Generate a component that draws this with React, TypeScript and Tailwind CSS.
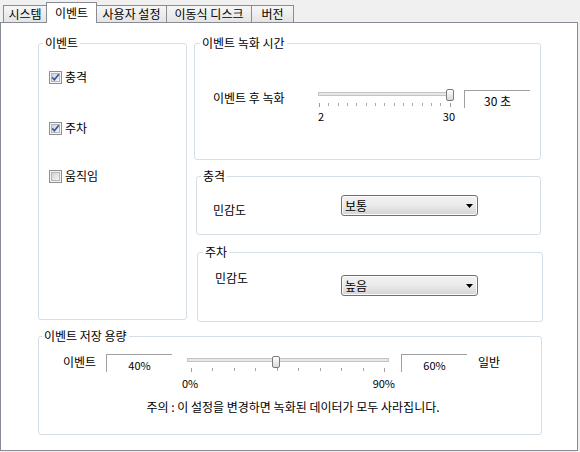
import React from "react";

function Tab({ label, active, cls }: { label: string; active?: boolean; cls: string }) {
  if (active) {
    return (
      <div
        className={
          "relative z-10 -ml-px -mb-px h-[21px] border border-b-0 border-[#898c95] bg-white flex items-start justify-center pt-[2px] leading-[16px] " +
          cls
        }
      >
        {label}
      </div>
    );
  }
  return (
    <div
      className={
        "-ml-px first:ml-0 h-[17px] border border-b-0 border-[#898c95] bg-linear-to-b from-[#f6f6f6] to-[#e4e4e4] flex items-center justify-center leading-[16px] " +
        cls
      }
    >
      {label}
    </div>
  );
}

function CheckBox({ checked }: { checked?: boolean }) {
  return (
    <div className="w-[13px] h-[13px] border border-[#8e8f8f] bg-[#f4f4f4] p-[1px] shrink-0">
      <div className="relative w-full h-full border border-[#b3b7bc] bg-linear-to-br from-[#cfd2d6] to-[#f6f6f6]">
        {checked && (
          <svg className="absolute -left-[1px] -top-[1px]" width="9" height="9" viewBox="0 0 9 9">
            <path d="M1.2 4.4 L3.4 6.8 L7.8 1.2" fill="none" stroke="#3a56a0" strokeWidth="1.7" />
          </svg>
        )}
      </div>
    </div>
  );
}

function Combo({ value }: { value: string }) {
  return (
    <div className="w-[137px] h-[21px] rounded-[3px] border border-[#707070] bg-linear-to-b from-[#f3f3f3] via-[#eaeaea] to-[#d4d4d4] shadow-[inset_0_0_0_1px_#fbfbfb] flex items-center justify-between pl-[3px] pr-[4px] leading-[16px]">
      <span>{value}</span>
      <svg width="7" height="4" viewBox="0 0 7 4">
        <path d="M0 0 H7 L3.5 4 Z" fill="#000" />
      </svg>
    </div>
  );
}

function Thumb({ cls }: { cls: string }) {
  return (
    <div
      className={
        "absolute top-0 w-[8px] h-[12px] rounded-[2px] border border-[#7b7b7b] bg-linear-to-b from-[#ffffff] to-[#d9d9d9] " +
        cls
      }
    />
  );
}

function Ticks({ count, cls }: { count: number; cls: string }) {
  return (
    <div className={"flex justify-between " + cls}>
      {Array.from({ length: count }).map((_, i) => (
        <div
          key={i}
          className={
            i === 0 || i === count - 1 ? "w-px h-[4px] bg-[#9c9c9c]" : "w-px h-[3px] bg-[#a8a8a8]"
          }
        />
      ))}
    </div>
  );
}

export default function App() {
  return (
    <div className="w-[580px] h-[452px] bg-[#f0f0f0] text-[12px] text-black font-['Noto_Sans_CJK_KR',sans-serif] overflow-hidden">
      {/* Tabs */}
      <div className="flex items-end h-[22px] pl-[3px]">
        <Tab label="시스템" cls="w-[44px]" />
        <Tab label="이벤트" active cls="w-[51px]" />
        <Tab label="사용자 설정" cls="w-[71px]" />
        <Tab label="이동식 디스크" cls="w-[86px]" />
        <Tab label="버전" cls="w-[43px]" />
      </div>

      {/* Panel */}
      <div className="w-[578px] h-[429px] border border-[#898c95] bg-white flex flex-col pt-[12px] pl-[37px]">
        <div className="flex items-start">
          {/* 이벤트 group */}
          <fieldset className="w-[149px] h-[285px] border border-[#d5dfe5] rounded-[3px]">
            <legend className="ml-[4px] px-[2px] leading-[16px]">이벤트</legend>
            <div className="flex flex-col pl-[10px]">
              <div className="mt-[18px] h-[16px] flex items-center gap-[3px]">
                <CheckBox checked />
                <span className="leading-[16px]">충격</span>
              </div>
              <div className="mt-[35px] h-[16px] flex items-center gap-[3px]">
                <CheckBox checked />
                <span className="leading-[16px]">주차</span>
              </div>
              <div className="mt-[32px] h-[16px] flex items-center gap-[3px]">
                <CheckBox />
                <span className="leading-[16px]">움직임</span>
              </div>
            </div>
          </fieldset>

          {/* Right column */}
          <div className="ml-[7px] flex flex-col">
            <fieldset className="w-[347px] h-[125px] border border-[#d5dfe5] rounded-[3px]">
              <legend className="ml-[5px] px-[2px] leading-[16px]">이벤트 녹화 시간</legend>
              <div className="mt-[36px] pl-[18px] flex items-start">
                <div className="w-[105px] mt-[3px] leading-[16px]">이벤트 후 녹화</div>
                <div className="relative w-[137px] mt-[2px]">
                  <div className="mt-[3px] w-[134px] h-[4px] border border-[#c4c4c4] bg-[#e7e7e7]" />
                  <Thumb cls="left-[128px]" />
                  <Ticks count={15} cls="mt-[7px] ml-[1px] w-[132px]" />
                  <div className="mt-[3px] flex justify-between text-[11px] leading-[12px]">
                    <span>2</span>
                    <span>30</span>
                  </div>
                </div>
                <div className="ml-[9px] mt-[3px] w-[66px] h-[18px] border-t border-l border-[#a0a0a0] pt-[3px] text-center leading-[14px]">
                  30 초
                </div>
              </div>
            </fieldset>

            <fieldset className="mt-[8px] ml-[2px] w-[345px] h-[67px] border border-[#d5dfe5] rounded-[3px]">
              <legend className="ml-[4px] px-[2px] leading-[16px]">충격</legend>
              <div className="mt-[11px] pl-[16px] flex items-start">
                <div className="w-[128px] mt-[7px] leading-[16px]">민감도</div>
                <Combo value="보통" />
              </div>
            </fieldset>

            <fieldset className="mt-[9px] ml-[3px] w-[346px] h-[78px] border border-[#d5dfe5] rounded-[3px]">
              <legend className="ml-[5px] px-[2px] leading-[16px]">주차</legend>
              <div className="mt-[10px] pl-[17px] flex items-start">
                <div className="w-[126px] leading-[16px]">민감도</div>
                <div className="mt-[5px]">
                  <Combo value="높음" />
                </div>
              </div>
            </fieldset>
          </div>
        </div>

        {/* 이벤트 저장 용량 */}
        <fieldset className="mt-[6px] w-[504px] h-[107px] border border-[#d5dfe5] rounded-[3px]">
          <legend className="ml-[3px] px-[2px] leading-[16px]">이벤트 저장 용량</legend>
          <div className="mt-[10px] pl-[24px] flex items-start">
            <div className="w-[43px] leading-[16px]">이벤트</div>
            <div className="w-[66px] h-[18px] border-t border-l border-[#a0a0a0] pt-[3px] text-center text-[11px] leading-[14px]">
              40%
            </div>
            <div className="relative ml-[15px] mt-[2px] w-[206px]">
              <div className="mt-[2px] w-[202px] h-[4px] border border-[#c4c4c4] bg-[#e7e7e7]" />
              <Thumb cls="left-[85px]" />
              <Ticks count={10} cls="mt-[6px] ml-[4px] w-[194px]" />
              <div className="mt-[5px] -ml-[5px] w-[213px] flex justify-between text-[11px] leading-[12px]">
                <span>0%</span>
                <span>90%</span>
              </div>
            </div>
            <div className="ml-[8px] w-[66px] h-[18px] border-t border-l border-[#a0a0a0] pt-[3px] text-center text-[11px] leading-[14px]">
              60%
            </div>
            <div className="ml-[11px] leading-[16px]">일반</div>
          </div>
          <div className="mt-[10px] pl-[6px] text-center leading-[16px]">
            주의 : 이 설정을 변경하면 녹화된 데이터가 모두 사라집니다.
          </div>
        </fieldset>
      </div>
    </div>
  );
}
